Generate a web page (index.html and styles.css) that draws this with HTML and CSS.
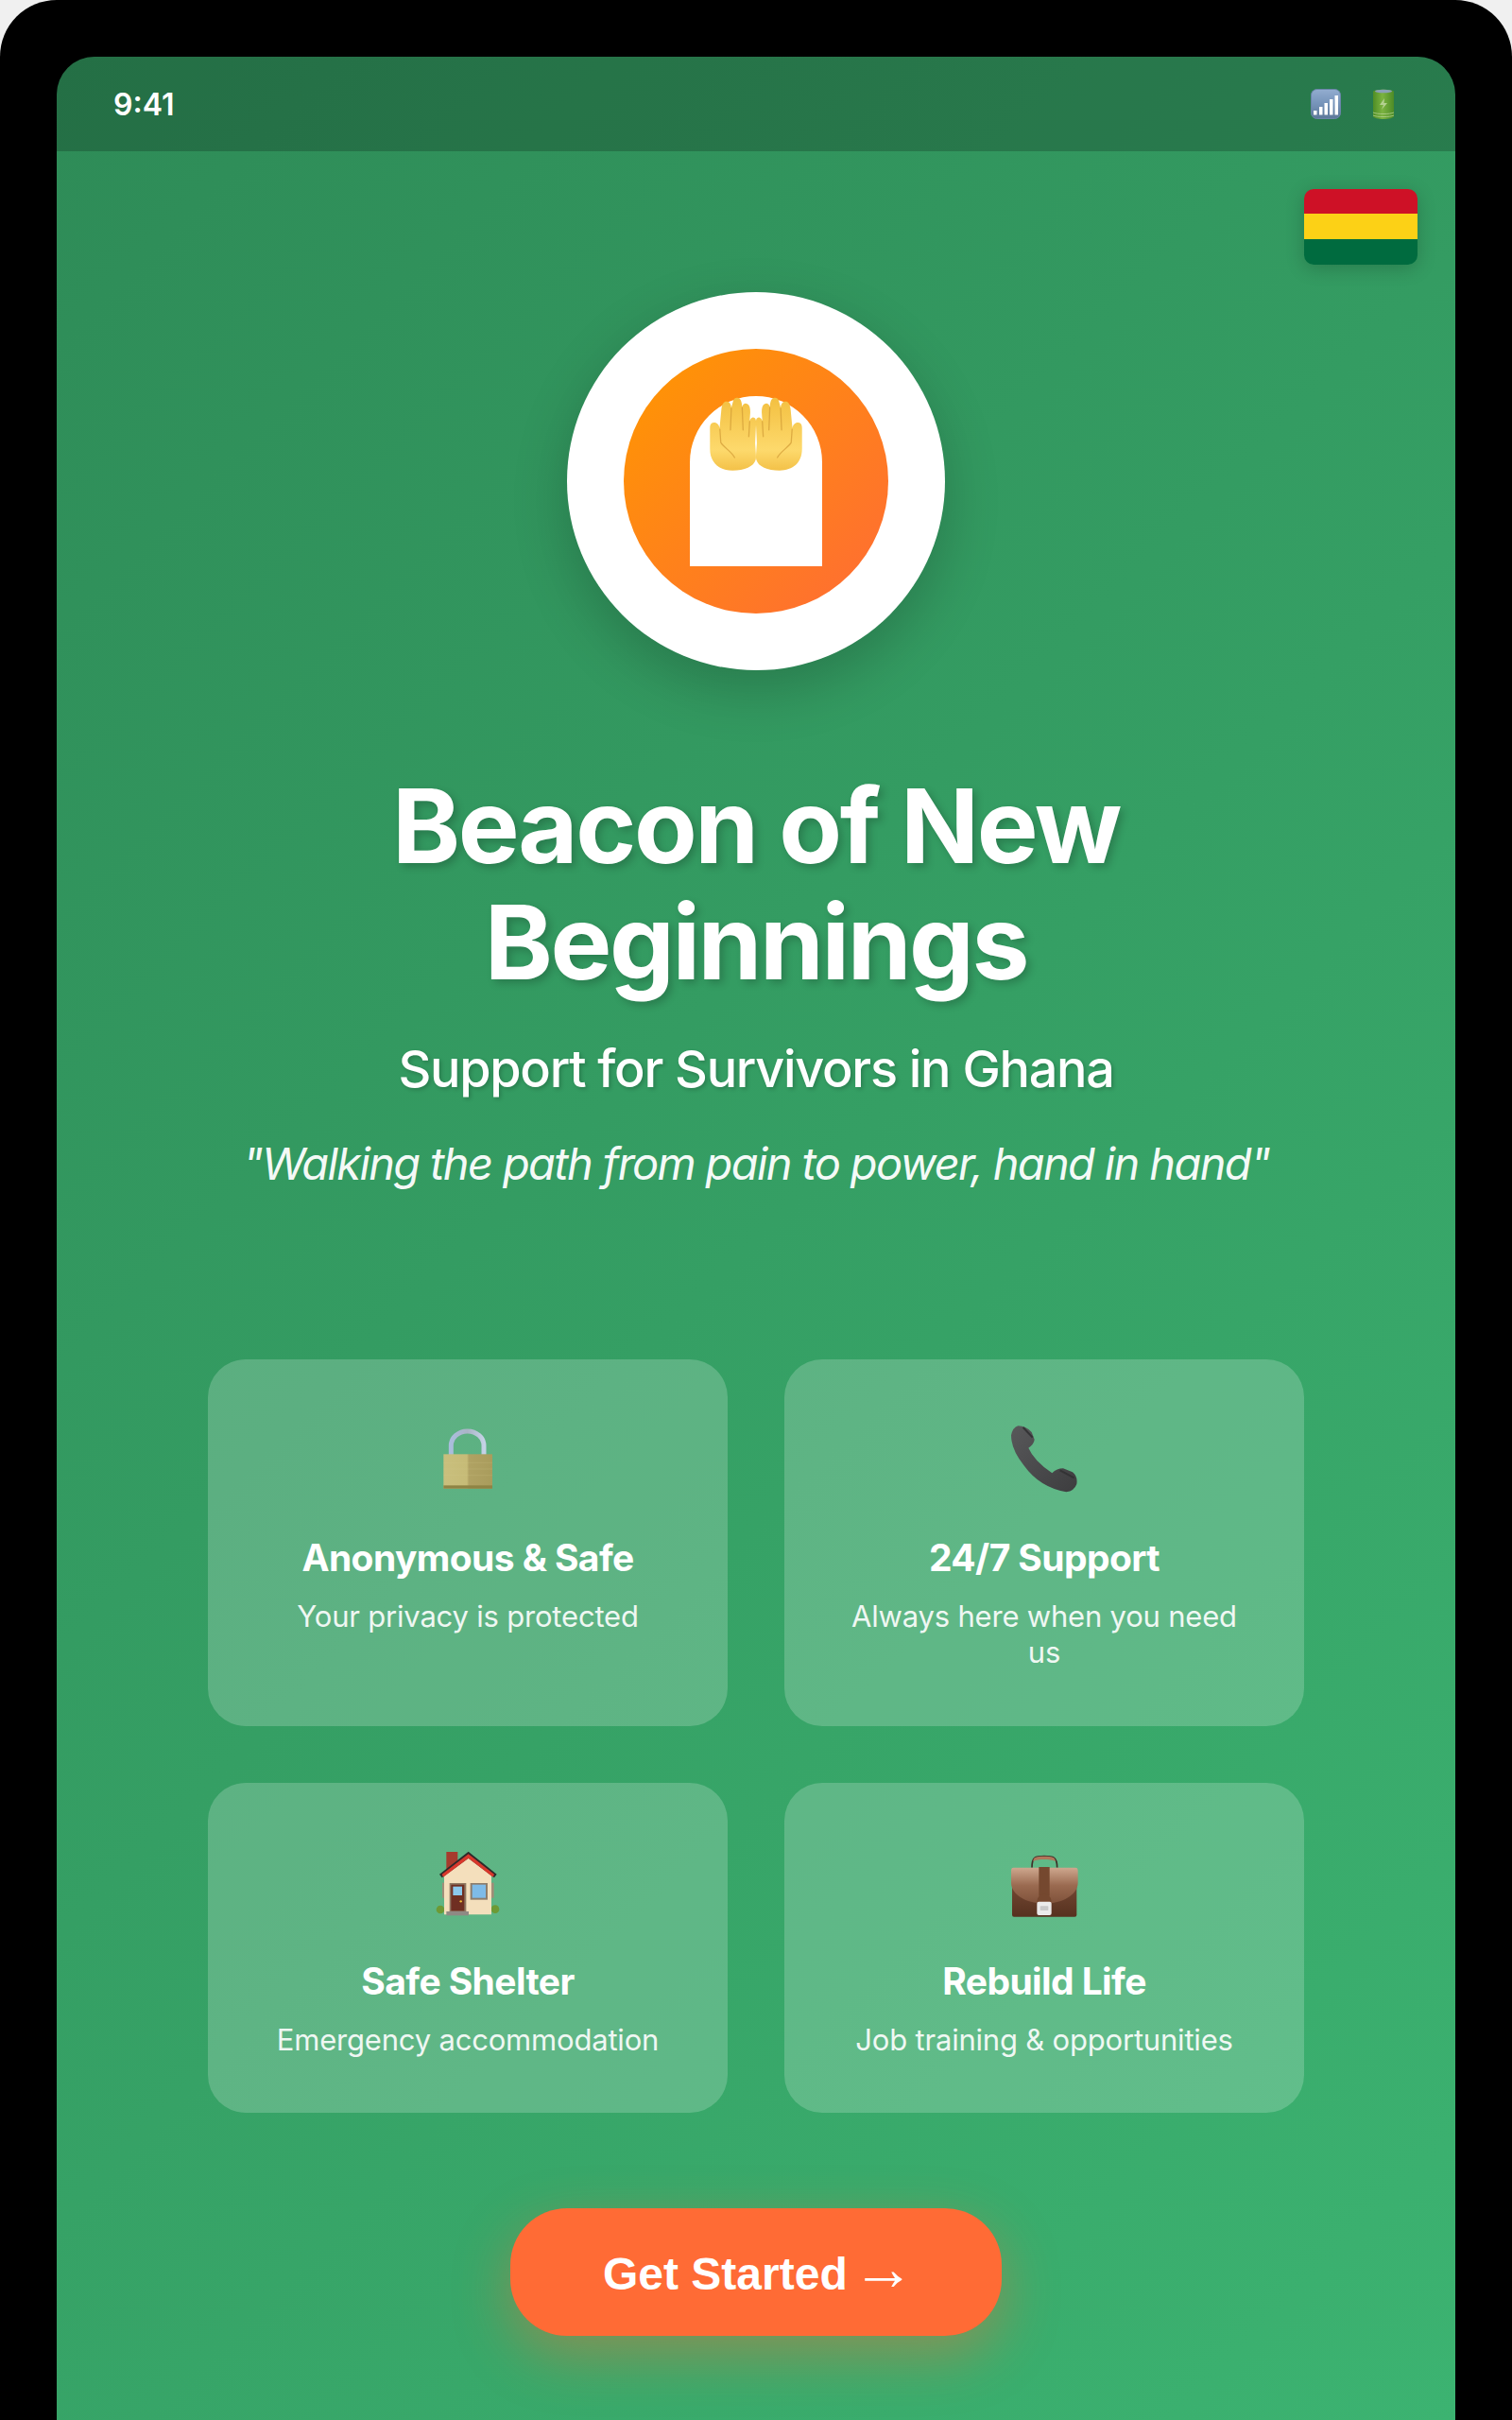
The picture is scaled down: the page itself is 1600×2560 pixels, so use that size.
FILE: index.html
```html
<!DOCTYPE html>
<html lang="en">

<head>
    <meta charset="UTF-8">
    <meta name="viewport" content="width=device-width, initial-scale=1.0">
    <title>Beacon of New Beginnings</title>
    <link rel="stylesheet" href="styles.css">
</head>

<body>
    <svg class="defs" width="0" height="0" aria-hidden="true">
        <defs>
            <linearGradient id="handFill" x1="0" y1="0" x2="0" y2="1">
                <stop offset="0" stop-color="#f3c041" />
                <stop offset="0.72" stop-color="#fdd96c" />
                <stop offset="1" stop-color="#f3c148" />
            </linearGradient>
            <linearGradient id="signalFill" x1="0" y1="0" x2="0" y2="1">
                <stop offset="0" stop-color="#93add0" />
                <stop offset="0.5" stop-color="#7593b9" />
                <stop offset="1" stop-color="#5d7899" />
            </linearGradient>
            <linearGradient id="batteryFill" x1="0" y1="0" x2="1" y2="0">
                <stop offset="0" stop-color="#4f8d25" />
                <stop offset="0.45" stop-color="#7bb341" />
                <stop offset="1" stop-color="#4d8b26" />
            </linearGradient>
            <linearGradient id="lockBody" x1="0" y1="0" x2="1" y2="0">
                <stop offset="0" stop-color="#c9bf7d" />
                <stop offset="0.48" stop-color="#c6bb77" />
                <stop offset="0.52" stop-color="#b0a263" />
                <stop offset="1" stop-color="#a99c5c" />
            </linearGradient>
            <linearGradient id="lockShackle" x1="0" y1="0" x2="1" y2="0">
                <stop offset="0" stop-color="#a9bddc" />
                <stop offset="0.5" stop-color="#aab4c6" />
                <stop offset="1" stop-color="#c4d2e6" />
            </linearGradient>
            <linearGradient id="phoneFill" x1="0" y1="0" x2="1" y2="1">
                <stop offset="0" stop-color="#58585a" />
                <stop offset="1" stop-color="#3d3d3f" />
            </linearGradient>
            <linearGradient id="caseFlap" x1="0" y1="0" x2="0" y2="1">
                <stop offset="0" stop-color="#cfa88f" />
                <stop offset="0.5" stop-color="#9a6a50" />
                <stop offset="1" stop-color="#7f523b" />
            </linearGradient>
            <linearGradient id="caseBase" x1="0" y1="0" x2="0" y2="1">
                <stop offset="0" stop-color="#7c4f39" />
                <stop offset="1" stop-color="#56311f" />
            </linearGradient>
            <symbol id="hand" viewBox="0 0 153 245" overflow="visible">
                <path fill="url(#handFill)" d="M75 241 C30 241 0 215 0 170 L0 100 C0 85 8 82 14 82 C24 82 30 90 32 100 L38 38 C40 18 48 10 56 12 C64 12 70 20 71 32 L76 14 C78 2 86 -2 94 0 C102 2 106 12 107 30 C110 18 118 16 124 20 C132 24 134 34 134 48 L132 76 C136 64 144 62 148 66 C153 70 154 76 153 90 L150 150 C152 180 154 195 152 205 C146 228 115 241 75 241Z" />
                <g fill="none" stroke="#d39d38" stroke-width="4" stroke-linecap="round" stroke-opacity="0.75">
                    <path d="M71 34 L68 106" />
                    <path d="M107 32 L110 106" />
                    <path d="M132 78 L129 128" />
                    <path d="M33 104 L36 148 C46 165 70 176 82 198" />
                </g>
            </symbol>
        </defs>
    </svg>

    <div class="device">
        <div class="screen">
            <div class="status-bar">
                <span class="time">9:41</span>
                <div class="status-icons">
                    <svg class="status-signal" viewBox="0 0 32 32">
                        <rect x="0.5" y="0.5" width="31" height="31" rx="6" fill="url(#signalFill)" stroke="#6a84a8" />
                        <rect x="3" y="23" width="3.5" height="4.5" fill="#fff" />
                        <rect x="9" y="19" width="3.5" height="8.5" fill="#fff" />
                        <rect x="14.5" y="15" width="3.5" height="12.5" fill="#fff" />
                        <rect x="20" y="11" width="3.5" height="16.5" fill="#fff" />
                        <rect x="25.5" y="7" width="3.5" height="20.5" fill="#fff" />
                    </svg>
                    <svg class="status-battery" viewBox="0 0 22 32">
                        <path d="M0 3 C0 0 22 0 22 3 L22 29 C22 33 0 33 0 29Z" fill="url(#batteryFill)" />
                        <ellipse cx="11" cy="2.5" rx="9" ry="1.8" fill="#8aa0b8" />
                        <path d="M12 10 L7 17 L11 17 L9 22 L15 15 L11.5 15Z" fill="#b4d090" />
                        <path d="M0 25 C4 27 18 27 22 25 M0 28 C4 30 18 30 22 28" fill="none" stroke="#b4d090" stroke-width="0.8" />
                    </svg>
                </div>
            </div>

            <div class="flag">
                <div class="flag-red"></div>
                <div class="flag-yellow"></div>
                <div class="flag-green"></div>
            </div>

            <main class="content">
                <div class="logo">
                    <div class="logo-inner">
                        <div class="logo-door"></div>
                        <svg class="logo-hands" viewBox="0 0 306 245">
                            <use href="#hand" x="0" y="0" width="153" height="245" />
                            <use href="#hand" x="0" y="0" width="153" height="245" transform="translate(306 0) scale(-1 1)" />
                        </svg>
                    </div>
                </div>

                <h1 class="title">Beacon of New<br>Beginnings</h1>
                <p class="subtitle">Support for Survivors in Ghana</p>
                <p class="quote">"Walking the path from pain to power, hand in hand"</p>

                <div class="cards">
                    <div class="card">
                        <svg class="card-icon" viewBox="45 39 240 240">
                            <path d="M112 148 V118 A52 46 0 0 1 216 118 V148" fill="none" stroke="url(#lockShackle)" stroke-width="15" />
                            <rect x="88" y="145" width="155" height="109" fill="url(#lockBody)" />
                            <rect x="88" y="244" width="155" height="10" fill="#8f8344" />
                            <path d="M88 172 H243 M88 192 H243 M88 212 H243" stroke="#d9d094" stroke-width="2" opacity="0.25" />
                        </svg>
                        <h3 class="card-title">Anonymous &amp; Safe</h3>
                        <p class="card-text">Your privacy is protected</p>
                    </div>
                    <div class="card">
                        <svg class="card-icon" viewBox="135 69 240 240">
                            <path fill="url(#phoneFill)" d="M172 85 Q197 85 215 105 L224 128 Q222 145 205 155 Q222 195 280 235 Q295 220 315 220 L345 232 Q362 245 358 270 Q350 292 325 295 Q240 280 190 210 Q150 160 150 115 Q155 90 172 85Z" />
                            <path d="M188 90 L218 122 M305 226 L350 250" stroke="#333335" stroke-width="6" fill="none" />
                        </svg>
                        <h3 class="card-title">24/7 Support</h3>
                        <p class="card-text">Always here when you need us</p>
                    </div>
                    <div class="card">
                        <svg class="card-icon" viewBox="75 60 240 240">
                            <circle cx="108" cy="267" r="13" fill="#6d9a35" />
                            <circle cx="282" cy="266" r="13" fill="#6d9a35" />
                            <rect x="127" y="84" width="36" height="55" fill="#a63b2d" />
                            <rect x="114" y="182" width="164" height="48" fill="#a08e78" />
                            <path d="M120 160 L197 100 L270 160 V283 H120Z" fill="#f4dfbc" />
                            <path d="M105 155 L197 83 L287 155 L279 166 L197 104 L113 166Z" fill="#2e2a2a" />
                            <path d="M113 155 L197 91 L279 155 L275 164 L197 104 L117 164Z" fill="#d8382c" />
                            <rect x="137" y="183" width="53" height="90" fill="#8f7862" />
                            <rect x="142" y="188" width="42" height="83" fill="#6f2f22" />
                            <rect x="148" y="194" width="29" height="28" fill="#8cc8ec" />
                            <circle cx="173" cy="241" r="3.5" fill="#f3c13a" />
                            <rect x="203" y="183" width="55" height="53" fill="#8d7d6c" />
                            <rect x="209" y="188" width="43" height="42" fill="#7ebbe8" />
                            <rect x="127" y="273" width="71" height="13" fill="#8f8a84" />
                        </svg>
                        <h3 class="card-title">Safe Shelter</h3>
                        <p class="card-text">Emergency accommodation</p>
                    </div>
                    <div class="card">
                        <svg class="card-icon" viewBox="75 30 240 240">
                            <path d="M156 104 C156 70 166 68 195 68 C224 68 236 70 236 104" fill="none" stroke="#3f3029" stroke-width="5" />
                            <path d="M160 84 C160 70 170 68 195 68 C220 68 230 70 230 84 C216 76 174 76 160 84Z" fill="#b0765a" />
                            <rect x="93" y="130" width="205" height="130" rx="6" fill="url(#caseBase)" />
                            <path d="M97 104 H294 Q302 104 302 114 V152 C302 190 250 218 197 218 C140 218 90 190 90 152 V114 Q90 104 97 104Z" fill="url(#caseFlap)" />
                            <rect x="178" y="102" width="34" height="92" fill="#75482f" />
                            <path d="M172 212 C172 180 218 180 218 212Z" fill="#75482f" />
                            <rect x="172" y="212" width="46" height="43" rx="6" fill="#ebebeb" />
                            <rect x="182" y="226" width="26" height="14" rx="2" fill="#c9c9c9" />
                        </svg>
                        <h3 class="card-title">Rebuild Life</h3>
                        <p class="card-text">Job training &amp; opportunities</p>
                    </div>
                </div>

                <button class="start-btn">Get Started <span class="start-arrow">→</span></button>
            </main>
        </div>
    </div>
</body>

</html>
```

FILE: styles.css
```css
* {
    box-sizing: border-box;
}

html,
body {
    margin: 0;
    height: 2560px;
    overflow: hidden;
}

body {
    background: #f0f0f0;
    font-family: Inter, "Liberation Sans", sans-serif;
    color: #fff;
}

.defs {
    position: absolute;
}

.device {
    height: 2560px;
    padding: 60px 60px 0;
    background: #000;
    border-radius: 60px 60px 0 0;
}

.screen {
    position: relative;
    height: 2500px;
    overflow: hidden;
    border-radius: 40px 40px 0 0;
    background: linear-gradient(135deg, #2e8b57, #3cb371);
}

.status-bar {
    display: flex;
    justify-content: space-between;
    align-items: center;
    height: 100px;
    padding: 0 65px 0 60px;
    background: rgba(0, 0, 0, 0.2);
}

.time {
    font-size: 32px;
    font-weight: 600;
}

.status-icons {
    display: flex;
    align-items: center;
    gap: 34px;
}

.status-signal {
    width: 32px;
    height: 32px;
}

.status-battery {
    width: 22px;
    height: 32px;
}

.flag {
    position: absolute;
    top: 140px;
    right: 40px;
    width: 120px;
    height: 80px;
    overflow: hidden;
    border-radius: 10px;
    box-shadow: 0 4px 20px rgba(0, 0, 0, 0.2);
}

.flag-red {
    height: 26px;
    background: #ce1126;
}

.flag-yellow {
    height: 27px;
    background: #fcd116;
}

.flag-green {
    height: 27px;
    background: #006b3f;
}

.content {
    display: flex;
    flex-direction: column;
    align-items: center;
    padding-top: 149px;
}

.logo {
    display: flex;
    align-items: center;
    justify-content: center;
    width: 400px;
    height: 400px;
    border-radius: 50%;
    background: #fff;
    box-shadow: 0 20px 60px rgba(0, 0, 0, 0.2);
}

.logo-inner {
    position: relative;
    width: 280px;
    height: 280px;
    border-radius: 50%;
    background: linear-gradient(135deg, #ff9800, #ff6b35);
}

.logo-door {
    position: absolute;
    top: 50px;
    left: 70px;
    width: 140px;
    height: 180px;
    border-radius: 70px 70px 0 0;
    background: #fff;
}

.logo-hands {
    position: absolute;
    top: 52px;
    left: 91px;
    width: 98px;
    height: 78px;
    overflow: visible;
}

.title {
    margin: 103px 0 0;
    font-size: 109px;
    font-weight: 700;
    line-height: 123px;
    letter-spacing: -2.4px;
    text-align: center;
    text-shadow: 4px 4px 8px rgba(0, 0, 0, 0.2);
}

.subtitle {
    margin: 39px 0 0;
    font-size: 54px;
    font-weight: 500;
    line-height: 68px;
    letter-spacing: -1.3px;
    text-shadow: 2px 2px 4px rgba(0, 0, 0, 0.2);
}

.quote {
    margin: 37px 0 0;
    font-size: 47px;
    font-style: italic;
    line-height: 58px;
    letter-spacing: -1.65px;
    opacity: 0.95;
}

.cards {
    display: grid;
    grid-template-columns: 550px 550px;
    gap: 60px;
    margin-top: 178px;
}

.card {
    padding: 65px 60px 58px;
    border-radius: 40px;
    background: rgba(255, 255, 255, 0.2);
    text-align: center;
}

.card-icon {
    display: block;
    width: 80px;
    height: 80px;
    margin: 0 auto;
}

.card-title {
    margin: 41px 0 0;
    font-size: 39px;
    font-weight: 700;
    line-height: 48px;
    letter-spacing: -0.6px;
}

.card-text {
    margin: 19px 0 0;
    font-size: 31px;
    line-height: 38.4px;
    letter-spacing: -0.2px;
    opacity: 0.9;
}

.start-btn {
    width: 520px;
    height: 135px;
    margin-top: 101px;
    padding: 0 0 8px 6px;
    border: 0;
    border-radius: 60px;
    background: #ff6b35;
    box-shadow: 0 20px 60px rgba(255, 107, 53, 0.4);
    color: #fff;
    font-family: "Liberation Sans", sans-serif;
    font-size: 48px;
    font-weight: 700;
}

.start-arrow {
    margin-left: -8px;
    font-size: 66px;
    font-weight: 400;
    line-height: 1;
}
```
